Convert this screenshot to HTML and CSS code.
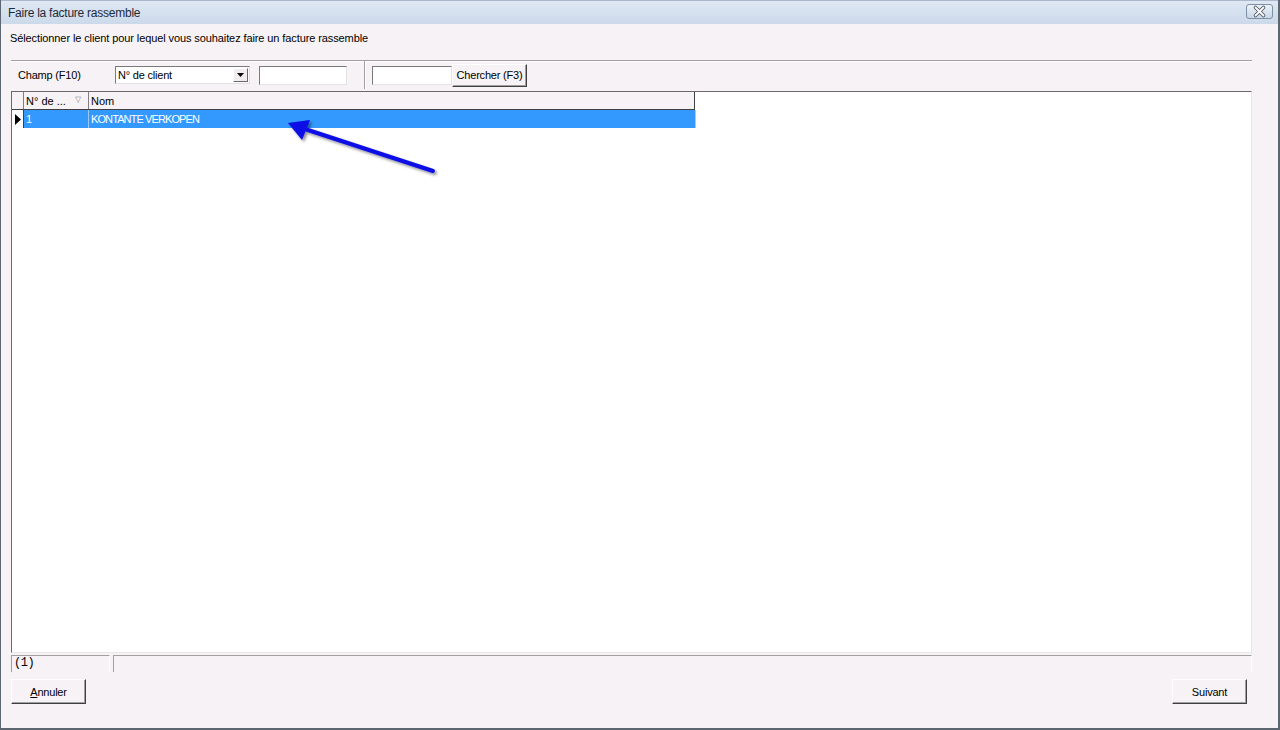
FILE: index.html
```html
<!DOCTYPE html>
<html lang="fr">
<head>
<meta charset="utf-8">
<title>Faire la facture rassemble</title>
<link rel="stylesheet" href="styles.css">
</head>
<body>
<div class="window">
  <div class="titlebar">
    <span class="title">Faire la facture rassemble</span>
    <span class="close">
      <svg width="27" height="15" viewBox="0 0 27 15">
        <defs>
          <linearGradient id="cg" x1="0" y1="0" x2="0" y2="1">
            <stop offset="0" stop-color="#eef3f9"/>
            <stop offset="1" stop-color="#c8d6e6"/>
          </linearGradient>
        </defs>
        <rect x="0.5" y="0.5" width="26" height="14" rx="2.5" fill="url(#cg)" stroke="#7f8fa6"/>
        <path d="M9.5 3.5 L17.5 11.5 M17.5 3.5 L9.5 11.5" stroke="#4c5566" stroke-width="3.6" stroke-linecap="round"/>
        <path d="M9.5 3.5 L17.5 11.5 M17.5 3.5 L9.5 11.5" stroke="#ffffff" stroke-width="1.8" stroke-linecap="round"/>
      </svg>
    </span>
  </div>
  <div class="content">
    <div class="prompt">Sélectionner le client pour lequel vous souhaitez faire un facture rassemble</div>
    <div class="separator"></div>
    <div class="toolbar">
      <span class="label">Champ (F10)</span>
      <span class="combo">
        <span class="combo-text">N° de client</span>
        <span class="combo-btn"><svg width="7" height="4" viewBox="0 0 7 4"><path d="M0 0 H7 L3.5 4 Z" fill="#000"/></svg></span>
      </span>
      <span class="textbox tb1"></span>
      <span class="vsep"></span>
      <span class="textbox tb2"></span>
      <span class="button search">Chercher (F3)</span>
    </div>
    <div class="grid">
      <div class="grid-head">
        <span class="cell ind"></span>
        <span class="cell c1">N° de ...<span class="sort">▽</span></span>
        <span class="cell c2">Nom</span>
      </div>
      <div class="grid-row selected">
        <span class="cell ind"><svg width="6" height="11" viewBox="0 0 6 11"><path d="M0 0 L6 5.5 L0 11 Z" fill="#000"/></svg></span>
        <span class="cell c1">1</span>
        <span class="cell c2 caps">KONTANTE VERKOPEN</span>
      </div>
    </div>
    <div class="statusbar">
      <span class="status s1">(1)</span>
      <span class="status s2"></span>
    </div>
    <div class="actions">
      <span class="button act"><u>A</u>nnuler</span>
      <span class="button act">Suivant</span>
    </div>
  </div>
  <svg class="arrow" width="200" height="80" viewBox="0 0 200 80">
    <defs>
      <filter id="sh" x="-20%" y="-50%" width="140%" height="200%">
        <feGaussianBlur in="SourceAlpha" stdDeviation="1.5"/>
        <feOffset dx="1.5" dy="2" result="b"/>
        <feComponentTransfer><feFuncA type="linear" slope="0.45"/></feComponentTransfer>
        <feMerge><feMergeNode/><feMergeNode in="SourceGraphic"/></feMerge>
      </filter>
    </defs>
    <g filter="url(#sh)">
      <path d="M160 56 L32 14" stroke="#0a0ae6" stroke-width="4" stroke-linecap="round"/>
      <path d="M15 8 L37 5 L29 25 Z" fill="#0a0ae6"/>
    </g>
  </svg>
</div>
</body>
</html>
```

FILE: styles.css
```css
html, body {
  margin: 0;
  padding: 0;
  background: #f6f2f6;
}

body {
  font-family: "Liberation Sans", Arial, sans-serif;
  font-size: 11px;
  color: #000;
}

.window {
  position: relative;
  width: 1280px;
  height: 730px;
  box-sizing: border-box;
  border-left: 1px solid #5c6670;
  border-right: 2px solid #5c6670;
  border-bottom: 2px solid #5c6670;
  background: #f6f2f6;
  display: flex;
  flex-direction: column;
}

.titlebar {
  height: 24px;
  flex: none;
  background: linear-gradient(#dfe8f3, #cbd9ea);
  display: flex;
  align-items: center;
  justify-content: space-between;
  padding: 0 5px 0 7px;
  box-sizing: border-box;
  border-top: 1px solid #a9b8ca;
}

.title {
  font-size: 12px;
  color: #1e2a3a;
  letter-spacing: -0.25px;
}

.close {
  display: flex;
  margin-top: -2px;
}

.content {
  flex: 1;
  display: flex;
  flex-direction: column;
  padding: 7px 26px 24px 10px;
  min-height: 0;
}

.prompt {
  height: 14px;
  line-height: 14px;
  letter-spacing: -0.1px;
  margin-left: -1px;
}

.separator {
  margin-top: 15px;
  height: 0;
  border-top: 1px solid #a0a0a0;
  border-bottom: 1px solid #ffffff;
}

.toolbar {
  display: flex;
  align-items: center;
  height: 26px;
  flex: none;
}

.label {
  margin-left: 7px;
  width: 97px;
  letter-spacing: -0.2px;
}

.combo {
  width: 135px;
  height: 18px;
  box-sizing: border-box;
  background: #fff;
  border-top: 1px solid #7a7a7a;
  border-left: 1px solid #7a7a7a;
  border-right: 1px solid #e0e0e0;
  border-bottom: 1px solid #e0e0e0;
  display: flex;
  align-items: center;
  justify-content: space-between;
}

.combo-text {
  padding-left: 2px;
  letter-spacing: -0.2px;
}

.combo-btn {
  width: 15px;
  height: 14px;
  margin-right: 1px;
  box-sizing: border-box;
  background: #f0ecf0;
  border-top: 1px solid #fff;
  border-left: 1px solid #fff;
  border-right: 1px solid #6a6a6a;
  border-bottom: 1px solid #6a6a6a;
  display: flex;
  align-items: center;
  justify-content: center;
}

.textbox {
  height: 19px;
  box-sizing: border-box;
  background: #fff;
  border-top: 1px solid #7a7a7a;
  border-left: 1px solid #7a7a7a;
  border-right: 1px solid #e3e3e3;
  border-bottom: 1px solid #e3e3e3;
}

.tb1 {
  width: 88px;
  margin-left: 9px;
}

.vsep {
  width: 0;
  height: 28px;
  margin: 0 6px 0 17px;
  border-left: 1px solid #a0a0a0;
  border-right: 1px solid #ffffff;
}

.tb2 {
  width: 80px;
}

.button {
  box-sizing: border-box;
  display: flex;
  align-items: center;
  justify-content: center;
  background: #f6f2f6;
  border-top: 1px solid #ffffff;
  border-left: 1px solid #ffffff;
  border-right: 1px solid #404040;
  border-bottom: 1px solid #404040;
  box-shadow: inset -1px -1px 0 #a0a0a0;
}

.search {
  width: 75px;
  height: 23px;
  letter-spacing: -0.2px;
}

.grid {
  flex: 1;
  margin-top: 3px;
  box-sizing: border-box;
  background: #fff;
  border-top: 1px solid #6a6a6a;
  border-left: 1px solid #6a6a6a;
  border-right: 1px solid #e8e8e8;
  border-bottom: 1px solid #e8e8e8;
}

.grid-head, .grid-row {
  display: flex;
  width: 683px;
  height: 18px;
}

.grid-head {
  background: #f6f2f6;
  border-bottom: 1px solid #404040;
  border-right: 1px solid #404040;
  height: 18px;
  box-sizing: border-box;
}

.grid-row {
  border-right: 1px solid #b0c8e8;
}

.cell {
  box-sizing: border-box;
  display: flex;
  align-items: center;
  white-space: nowrap;
  padding-left: 2px;
  letter-spacing: 0;
}

.cell.ind {
  width: 12px;
  padding-left: 0;
  border-right: 1px solid #404040;
  justify-content: center;
}

.grid-head .cell.ind {
  border-right: 1px solid #808080;
}

.grid-head .c1 {
  width: 65px;
  border-right: 1px solid #808080;
  position: relative;
}

.sort {
  position: absolute;
  right: 7px;
  top: 3px;
  font-size: 8px;
  color: #8a8a8a;
}

.grid-row .c1 {
  width: 65px;
  border-right: 1px solid #9cc8f5;
}

.c2 {
  flex: 1;
}

.caps {
  letter-spacing: -0.9px;
}

.grid-row.selected .c1,
.grid-row.selected .c2 {
  background: #3399ff;
  color: #fff;
}

.grid-row .cell.ind {
  background: #fff;
}

.statusbar {
  display: flex;
  height: 17px;
  flex: none;
  margin-top: 2px;
  gap: 3px;
}

.status {
  box-sizing: border-box;
  border-top: 1px solid #a0a0a0;
  border-left: 1px solid #a0a0a0;
  border-right: 1px solid #ffffff;
  background: #f6f2f6;
}

.s1 {
  width: 99px;
  font-family: "Liberation Mono", "Courier New", monospace;
  font-size: 12px;
  line-height: 15px;
  padding-left: 2px;
  letter-spacing: -0.5px;
}

.s2 {
  flex: 1;
}

.actions {
  display: flex;
  flex: none;
  justify-content: space-between;
  margin-top: 7px;
  margin-left: 0;
  margin-right: 5px;
}

.act {
  width: 75px;
  height: 25px;
  letter-spacing: -0.2px;
}

.arrow {
  position: absolute;
  left: 272px;
  top: 115px;
  pointer-events: none;
}
```
